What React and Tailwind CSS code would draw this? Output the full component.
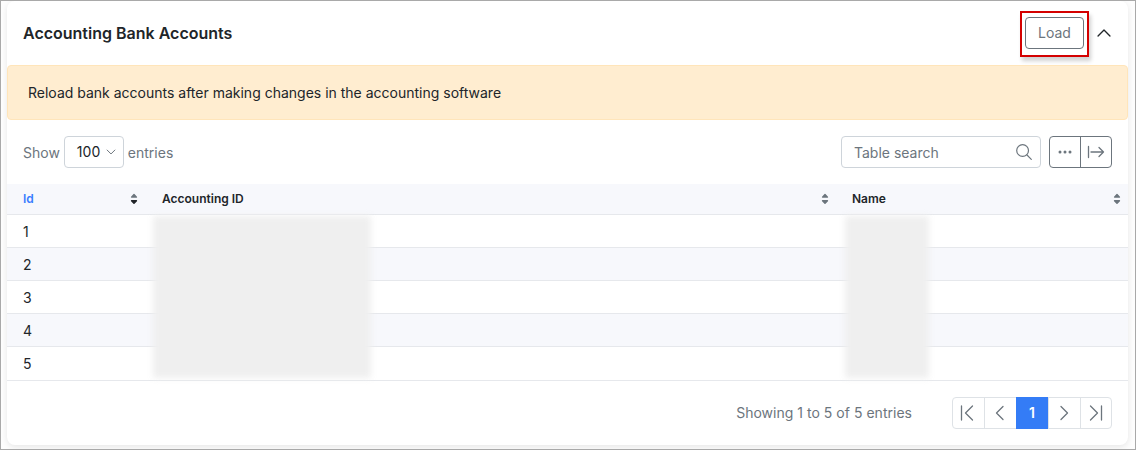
const ROWS = [1, 2, 3, 4, 5];

function Line({ d, className, w = 1.3 }) {
  return (
    <svg viewBox="0 0 18 18" className={className} fill="none" stroke="currentColor" strokeWidth={w} strokeLinecap="round" strokeLinejoin="round">
      <path d={d} />
    </svg>
  );
}

function Sort({ active }) {
  return (
    <svg viewBox="0 0 8 12" className="h-3 w-2 shrink-0">
      <path d="M4 1.4 6.5 4.1H1.5Z" fill="#6c757d" stroke="#6c757d" strokeWidth="1.3" strokeLinejoin="round" />
      <path d="M4 10.4 1.5 7.7H6.5Z" fill={active ? "#212529" : "#6c757d"} stroke={active ? "#212529" : "#6c757d"} strokeWidth="1.3" strokeLinejoin="round" />
    </svg>
  );
}

function Redacted({ className }) {
  return <div className={`absolute bg-[#efefef] blur-[3px] ${className}`} />;
}

export default function App() {
  return (
    <div className="h-[450px] w-[1136px] overflow-hidden border border-[#a9a9a9] bg-[#fdfdfd] pl-1.5 pr-[7px] font-['Inter',sans-serif] text-sm text-[#212529]">
      <div className="relative flex h-[444px] flex-col rounded-lg bg-white shadow-[0_2px_6px_rgba(0,0,0,0.09)]">
        <header className="flex h-16 shrink-0 items-center justify-between pl-4 pr-4">
          <h1 className="text-base font-semibold">Accounting Bank Accounts</h1>
          <div className="flex items-center gap-[7px]">
            <div className="mt-px h-[46px] w-[69px] border-2 border-[#d40000] px-[3px] pt-1 shadow-[2px_4px_4px_rgba(0,0,0,0.18)]">
              <button className="block h-8 w-[59px] rounded border border-[#6c757d] text-[#6c757d]">Load</button>
            </div>
            <Line className="size-4" d="M2.3 12.3 9 5.6l6.7 6.7" w={1.5} />
          </div>
        </header>

        <div className="flex h-[55px] shrink-0 items-center rounded border border-[#ffe5ba] bg-[#ffedd0] px-5">
          Reload bank accounts after making changes in the accounting software
        </div>

        <div className="flex h-16 shrink-0 items-center justify-between px-4 text-[#6c757d]">
          <div className="flex items-center gap-1">
            <span className="pt-0.5">Show</span>
            <div className="flex h-8 w-[60px] items-center justify-between rounded border border-[#ced4da] pl-3 pr-[7px] text-[#212529]">
              100
              <Line className="size-2.5 text-[#6c757d]" d="M2 5.5l7 7 7-7" w={1.8} />
            </div>
            <span className="pt-0.5">entries</span>
          </div>
          <div className="flex gap-2">
            <div className="flex h-8 w-[200px] items-center justify-between rounded border border-[#ced4da] pl-3 pr-2">
              <span className="pt-0.5">Table search</span>
              <svg viewBox="0 0 16 16" className="size-4" fill="none" stroke="currentColor" strokeWidth="1.2" strokeLinecap="round">
                <circle cx="6.6" cy="6.5" r="5.9" />
                <path d="m11 11 4.3 4.3" />
              </svg>
            </div>
            <div className="flex h-8 w-[63px] rounded border border-[#6c757d]">
              <button className="flex w-[31px] items-center justify-center border-r border-[#6c757d]">
                <svg viewBox="0 0 14 4" className="h-1 w-3.5" fill="currentColor">
                  <circle cx="2" cy="2" r="1.5" />
                  <circle cx="7" cy="2" r="1.5" />
                  <circle cx="12" cy="2" r="1.5" />
                </svg>
              </button>
              <button className="flex flex-1 items-center justify-center">
                <Line className="size-[18px]" d="M1.5 3.5v11M4 9h12.5M12 4.5 16.5 9 12 13.5" />
              </button>
            </div>
          </div>
        </div>

        <div className="relative">
          <table className="w-full table-fixed border-separate border-spacing-0 text-left">
            <colgroup>
              <col className="w-[139px]" />
              <col className="w-[690px]" />
              <col />
            </colgroup>
            <thead className="bg-[#f7f8fc] text-xs">
              <tr className="h-[31px]">
                <th className="border-b border-[#e6e8ec] p-0 pl-4 pr-2 font-semibold text-[#377dff]">
                  <div className="flex items-center justify-between">Id<Sort active /></div>
                </th>
                <th className="border-b border-[#e6e8ec] p-0 pl-4 pr-[7px] font-semibold">
                  <div className="flex items-center justify-between">Accounting ID<Sort /></div>
                </th>
                <th className="border-b border-[#e6e8ec] p-0 pl-4 pr-[7px] font-semibold">
                  <div className="flex items-center justify-between">Name<Sort /></div>
                </th>
              </tr>
            </thead>
            <tbody>
              {ROWS.map((id) => (
                <tr key={id} className="group h-[33px] last:h-[34px] even:bg-[#f7f8fc]">
                  <td className="border-b border-[#e6e8ec] p-0 pl-4 pt-px group-last:pb-px">{id}</td>
                  <td className="border-b border-[#e6e8ec] p-0" />
                  <td className="border-b border-[#e6e8ec] p-0" />
                </tr>
              ))}
            </tbody>
          </table>
          <Redacted className="left-[146px] top-[32px] h-[162px] w-[218px]" />
          <Redacted className="left-[838px] top-[32px] h-[162px] w-[84px]" />
        </div>

        <footer className="flex items-center justify-end gap-10 px-4 pt-4 text-[#6c757d]">
          <span className="tracking-[0.02px]">Showing 1 to 5 of 5 entries</span>
          <nav className="flex h-8 w-40 rounded border border-[#dee2e6]">
            <button className="flex w-8 items-center justify-center border-r border-[#dee2e6] pr-1">
              <Line className="size-[18px]" d="M3.5 2v14M14.5 2l-7 7 7 7" />
            </button>
            <button className="flex w-[31px] items-center justify-center pr-0.5">
              <Line className="size-[18px]" d="M12 2.5 5.5 9l6.5 6.5" />
            </button>
            <button className="-my-px w-8 bg-[#347cf6] font-semibold text-white">1</button>
            <button className="flex w-[33px] items-center justify-center border-x border-[#dee2e6] pr-px">
              <Line className="size-[18px]" d="m6 2.5 6.5 6.5-6.5 6.5" />
            </button>
            <button className="flex w-[30px] items-center justify-center">
              <Line className="size-[18px]" d="M14.5 2v14M3.5 2l7 7-7 7" />
            </button>
          </nav>
        </footer>
      </div>
    </div>
  );
}
